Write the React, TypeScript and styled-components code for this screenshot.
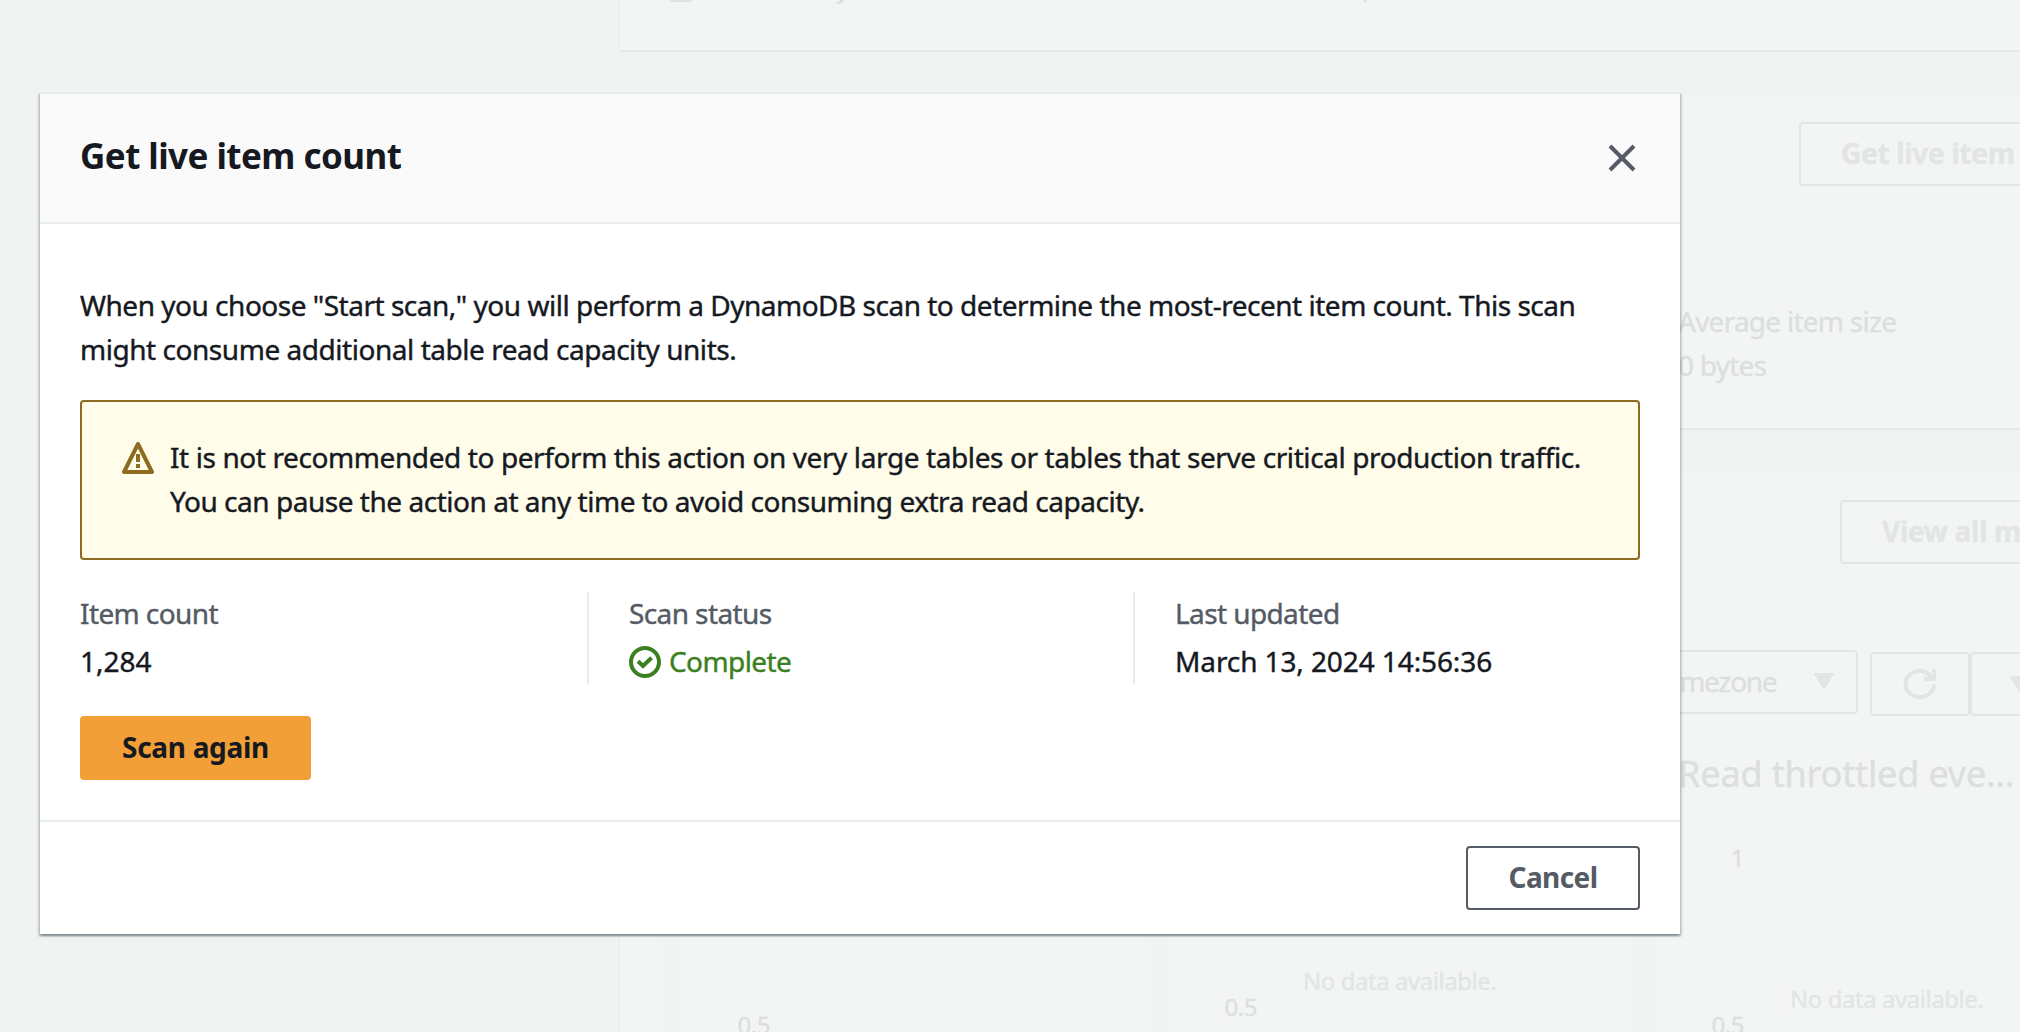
import React from "react";
import styled, { createGlobalStyle } from "styled-components";

const Global = createGlobalStyle`
  *, *::before, *::after { box-sizing: border-box; }
  body {
    margin: 0;
    background: #f1f3f3;
    color: #16191f;
    font-family: "Noto Sans", "Open Sans", sans-serif;
    font-size: 28px;
    line-height: 44px;
    letter-spacing: -0.45px;
    overflow: hidden;
  }
`;

/* ---------- faded console page ---------- */

const Page = styled.div`
  position: relative;
  width: 2020px;
  height: 1032px;
  overflow: hidden;
  background: #f1f3f3;
`;

const Content = styled.main`
  display: flex;
  flex-direction: column;
  width: 1560px;
  margin-left: 620px;
  color: #dcdfde;
  -webkit-text-stroke: 0.4px currentColor;
`;

const Card = styled.section<{ $height: number; $gap?: number }>`
  flex: none;
  height: ${(p) => p.$height}px;
  margin-top: ${(p) => p.$gap ?? 0}px;
  background: #f3f5f4;
  box-shadow: 0 2px 1px #e7e9e9, -1px 0 1px #eceeee;
`;

const CardHeader = styled.div<{ $height: number; $indent: number; $top: number }>`
  display: flex;
  align-items: flex-start;
  height: ${(p) => p.$height}px;
  padding: ${(p) => p.$top}px 0 0 ${(p) => p.$indent}px;
  border-top: 2px solid #f1f3f3;
  border-bottom: 2px solid #f1f3f3;
`;

const GhostButton = styled.button<{ $width: number }>`
  flex: none;
  display: flex;
  align-items: center;
  width: ${(p) => p.$width}px;
  height: 64px;
  padding: 0 0 2px 40px;
  border: 2px solid #e2e5e4;
  border-radius: 4px;
  background: transparent;
  color: #e2e5e4;
  font: inherit;
  font-weight: 700;
  letter-spacing: -0.3px;
  white-space: nowrap;
`;

const Property = styled.div`
  display: flex;
  flex-direction: column;
  padding: 32px 0 0 1058px;
  letter-spacing: -0.75px;
`;

const Toolbar = styled.div`
  display: flex;
  align-items: flex-start;
  height: 143px;
  padding: 54px 0 0 978px;
  border-bottom: 2px solid #f1f3f3;
`;

const Select = styled.div`
  display: flex;
  align-items: center;
  justify-content: space-between;
  width: 260px;
  height: 64px;
  padding: 0 22px 2px 0;
  border: 2px solid #e2e5e4;
  border-radius: 4px;
  letter-spacing: -1.3px;
  white-space: nowrap;
  & > span { width: 178px; margin-left: -3px; text-align: right; }
`;

const IconButton = styled.div<{ $gap: number }>`
  display: flex;
  align-items: center;
  justify-content: center;
  width: 100px;
  height: 64px;
  margin: 2px 0 0 ${(p) => p.$gap}px;
  border: 2px solid #e2e5e4;
  border-radius: 4px;
`;

const Board = styled.div`
  display: grid;
  grid-template-columns: repeat(3, 467px);
  gap: 20px;
  height: 300px;
  margin-left: 40px;
  padding-left: 20px;
  background: #f1f4f3;
`;

const Chart = styled.div<{ $lift: number }>`
  display: flex;
  flex-direction: column;
  background: #f3f5f4;
  padding-top: ${(p) => 15 - p.$lift / 2}px;
`;

const ChartTitle = styled.h3<{ $lift: number }>`
  height: ${(p) => 92 - p.$lift / 2}px;
  margin: 0;
  padding-left: 24px;
  font-size: 36px;
  line-height: 40px;
  font-weight: 400;
  letter-spacing: -0.15px;
  white-space: nowrap;
`;

const AxisRow = styled.div`
  display: flex;
  align-items: center;
  gap: 8px;
  height: 24px;
  font-size: 24px;
  line-height: 24px;
  & > span { width: 90px; text-align: right; }
  &::after { content: ""; width: 310px; height: 2px; background: #f1f3f3; }
`;

const ChartMessage = styled.div`
  height: 30px;
  margin-top: 113px;
  padding-left: 136px;
  font-size: 24px;
  line-height: 32px;
  color: #e2e5e4;
`;

/* ---------- dialog ---------- */

const Dialog = styled.div`
  position: absolute;
  left: 40px;
  top: 92px;
  width: 1640px;
  height: 842px;
  display: flex;
  flex-direction: column;
  background: #fff;
  border-top: 2px solid #eaeded;
  box-shadow: 0 2px 2px rgba(0, 28, 36, 0.3), 2px 2px 2px rgba(0, 28, 36, 0.15),
    -2px 2px 2px rgba(0, 28, 36, 0.15);
`;

const DialogHeader = styled.header`
  display: flex;
  align-items: center;
  justify-content: space-between;
  height: 130px;
  padding: 0 42px 0 40px;
  background: #fafafa;
  border-bottom: 2px solid #eaeded;
`;

const DialogTitle = styled.h2`
  margin: 0;
  padding-bottom: 5px;
  font-size: 35px;
  font-weight: 700;
  letter-spacing: -0.55px;
`;

const DialogBody = styled.div`
  flex: 1;
  padding: 59px 40px 0;
`;

const Paragraph = styled.p`
  margin: 0;
  white-space: nowrap;
  -webkit-text-stroke: 0.4px currentColor;
`;

const Line = styled.span<{ $spacing: number }>`
  display: block;
  letter-spacing: ${(p) => p.$spacing}px;
`;

const Alert = styled.div`
  display: flex;
  gap: 16px;
  height: 160px;
  margin: 29px 0 32px;
  padding: 33px 0 0 40px;
  border: 2px solid #8d6b20;
  border-radius: 4px;
  background: #fffdea;
  & > svg { flex: none; margin-top: 7px; }
`;

const Stats = styled.div`
  display: grid;
  grid-template-columns: 507px 546px 507px;
  height: 92px;
`;

const Stat = styled.div<{ $divided?: boolean }>`
  display: flex;
  flex-direction: column;
  gap: 6px;
  line-height: 42px;
  padding-left: ${(p) => (p.$divided ? 40 : 0)}px;
  border-left: ${(p) => (p.$divided ? "2px solid #eaeded" : "none")};
  -webkit-text-stroke: 0.4px currentColor;
`;

const StatLabel = styled.span`
  color: #545b64;
  letter-spacing: -0.6px;
`;

const StatValue = styled.span<{ $spacing?: number }>`
  letter-spacing: ${(p) => p.$spacing ?? 0}px;
`;

const Success = styled.span`
  display: flex;
  align-items: center;
  gap: 8px;
  height: 42px;
  color: #3b8020;
  letter-spacing: -0.6px;
  & > svg { margin-top: 1px; }
`;

const Button = styled.button<{ $primary?: boolean }>`
  width: ${(p) => (p.$primary ? 231 : 174)}px;
  height: 64px;
  padding: 0 0 2px;
  border: 2px solid ${(p) => (p.$primary ? "#f29f38" : "#545b64")};
  border-radius: 4px;
  background: ${(p) => (p.$primary ? "#f29f38" : "#fff")};
  color: ${(p) => (p.$primary ? "#16191f" : "#545b64")};
  font: inherit;
  font-weight: 700;
  letter-spacing: ${(p) => (p.$primary ? -0.3 : -0.6)}px;
`;

const ScanAction = styled.div`
  display: flex;
  margin-top: 32px;
`;

const DialogFooter = styled.footer`
  display: flex;
  justify-content: flex-end;
  height: 114px;
  padding: 24px 40px 0;
  border-top: 2px solid #eaeded;
`;

const CloseIcon = () => (
  <svg width="32" height="32" viewBox="0 0 16 16" fill="none" stroke="#545b64" strokeWidth="2">
    <path d="m2 2 12 12M14 2 2 14" />
  </svg>
);

const WarningIcon = () => (
  <svg width="32" height="32" viewBox="0 0 16 16" fill="none" stroke="#8d6b20" strokeWidth="2">
    <path d="m8 1 7 14H1L8 1z" strokeLinejoin="round" />
    <path d="M8 6v4M8 11v2" />
  </svg>
);

const SuccessIcon = () => (
  <svg width="32" height="32" viewBox="0 0 16 16" fill="none" stroke="currentColor" strokeWidth="2">
    <circle cx="8" cy="8" r="7" />
    <path d="m4.5 7.6 2.5 2.4 4.3-4.1" />
  </svg>
);

const RefreshIcon = () => (
  <svg width="36" height="34" viewBox="0 0 18 17" fill="none" stroke="#e2e5e4" strokeWidth="2">
    <path d="M16 8.700c0 3.600-3.300 6.300-7.200 6.300S1.800 12.200 1.800 8.500 4.900 2 8.800 2c2.900 0 5.200 1.700 6.400 4" />
    <path d="M11 6h5.100V1" />
  </svg>
);

const Caret = () => (
  <svg width="20" height="16" viewBox="0 0 20 16" fill="#e2e5e4" stroke="#e2e5e4" strokeWidth="2" strokeLinejoin="round">
    <path d="M1 1h18l-9 14z" />
  </svg>
);

const ClippedRow = () => (
  <svg width="800" height="6" viewBox="0 0 800 6" fill="#dfe2e1" display="block">
    <path d="M50 0h22q0 2-2 2H52q-2 0-2-2z" />
    <path d="M220 0h4q-1 4-5 4h-3v-2h1q2 0 3-2zM744 0h3l-1 2h-3z" />
  </svg>
);

export default function App() {
  return (
    <Page>
      <Global />
      <Content>
        <Card $height={50}>
          <ClippedRow />
        </Card>
        <Card $height={336} $gap={42}>
          <CardHeader $height={175} $indent={1179} $top={28}>
            <GhostButton $width={340}>Get live item count</GhostButton>
          </CardHeader>
          <Property>
            <span>Average item size</span>
            <span>0 bytes</span>
          </Property>
        </Card>
        <Card $height={600} $gap={40}>
          <CardHeader $height={128} $indent={1220} $top={30}>
            <GhostButton $width={300}>View all metrics</GhostButton>
          </CardHeader>
          <Toolbar>
            <Select>
              <span>Local timezone</span>
              <Caret />
            </Select>
            <IconButton $gap={12}>
              <RefreshIcon />
            </IconButton>
            <IconButton $gap={0}>
              <Caret />
            </IconButton>
          </Toolbar>
          <Board>
            <Chart $lift={0}>
              <ChartTitle $lift={0} />
              <AxisRow><span>1</span></AxisRow>
              <ChartMessage />
              <AxisRow><span>0.5</span></AxisRow>
            </Chart>
            <Chart $lift={18}>
              <ChartTitle $lift={18} />
              <AxisRow><span>1</span></AxisRow>
              <ChartMessage>No data available.</ChartMessage>
              <AxisRow><span>0.5</span></AxisRow>
            </Chart>
            <Chart $lift={0}>
              <ChartTitle $lift={0}>Read throttled eve…</ChartTitle>
              <AxisRow><span>1</span></AxisRow>
              <ChartMessage>No data available.</ChartMessage>
              <AxisRow><span>0.5</span></AxisRow>
            </Chart>
          </Board>
        </Card>
      </Content>

      <Dialog role="dialog">
        <DialogHeader>
          <DialogTitle>Get live item count</DialogTitle>
          <CloseIcon />
        </DialogHeader>
        <DialogBody>
          <Paragraph>
            <Line $spacing={-0.49}>
              When you choose "Start scan," you will perform a DynamoDB scan to determine the most-recent item count. This scan
            </Line>
            <Line $spacing={-0.46}>might consume additional table read capacity units.</Line>
          </Paragraph>
          <Alert>
            <WarningIcon />
            <Paragraph>
              <Line $spacing={-0.4}>
                It is not recommended to perform this action on very large tables or tables that serve critical production traffic.
              </Line>
              <Line $spacing={-0.47}>
                You can pause the action at any time to avoid consuming extra read capacity.
              </Line>
            </Paragraph>
          </Alert>
          <Stats>
            <Stat>
              <StatLabel>Item count</StatLabel>
              <StatValue>1,284</StatValue>
            </Stat>
            <Stat $divided>
              <StatLabel>Scan status</StatLabel>
              <Success>
                <SuccessIcon />
                Complete
              </Success>
            </Stat>
            <Stat $divided>
              <StatLabel>Last updated</StatLabel>
              <StatValue $spacing={-0.1}>March 13, 2024 14:56:36</StatValue>
            </Stat>
          </Stats>
          <ScanAction>
            <Button $primary>Scan again</Button>
          </ScanAction>
        </DialogBody>
        <DialogFooter>
          <Button>Cancel</Button>
        </DialogFooter>
      </Dialog>
    </Page>
  );
}
